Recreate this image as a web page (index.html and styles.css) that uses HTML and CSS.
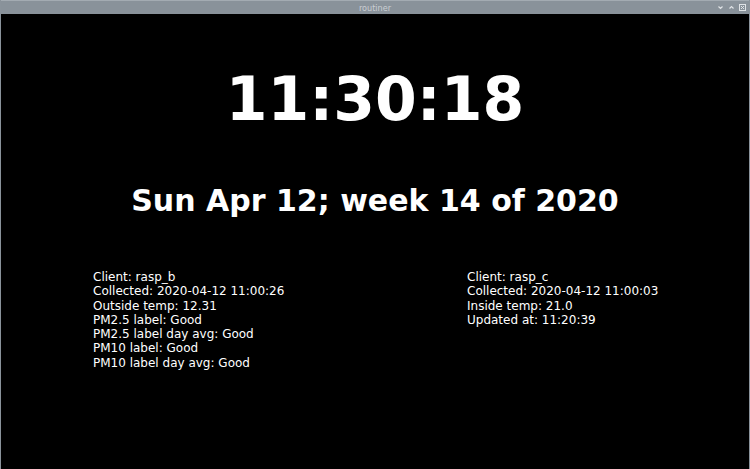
FILE: index.html
```html
<!DOCTYPE html>
<html>
<head>
<meta charset="utf-8">
<title>routiner</title>
<link rel="stylesheet" href="styles.css">
</head>
<body>
<div class="window">
  <div class="titlebar">
    <span class="title">routiner</span>
    <div class="controls">
      <svg class="ctl" width="7" height="7" viewBox="0 0 7 7"><path d="M1.5 2.5 L3.5 4.5 L5.5 2.5" fill="none" stroke="#dfe3e6" stroke-width="1.2"/></svg>
      <svg class="ctl" width="7" height="7" viewBox="0 0 7 7"><path d="M1.5 4.5 L3.5 2.5 L5.5 4.5" fill="none" stroke="#dfe3e6" stroke-width="1.2"/></svg>
      <svg class="ctl" width="7" height="7" viewBox="0 0 7 7"><rect x="0.5" y="0.5" width="6" height="6" fill="none" stroke="#dfe3e6" stroke-width="1"/><path d="M2 2 L5 5 M5 2 L2 5" stroke="#dfe3e6" stroke-width="1"/></svg>
    </div>
  </div>
  <main class="content">
    <div class="clock">11:30:18</div>
    <div class="date">Sun Apr 12; week 14 of 2020</div>
    <div class="panels">
      <div class="panel">
        <div>Client: rasp_b</div>
        <div>Collected: 2020-04-12 11:00:26</div>
        <div>Outside temp: 12.31</div>
        <div>PM2.5 label: Good</div>
        <div>PM2.5 label day avg: Good</div>
        <div>PM10 label: Good</div>
        <div>PM10 label day avg: Good</div>
      </div>
      <div class="panel">
        <div>Client: rasp_c</div>
        <div>Collected: 2020-04-12 11:00:03</div>
        <div>Inside temp: 21.0</div>
        <div>Updated at: 11:20:39</div>
      </div>
    </div>
  </main>
</div>
</body>
</html>
```
FILE: styles.css
```css
html, body {
  margin: 0;
  padding: 0;
  width: 750px;
  height: 469px;
  overflow: hidden;
  background: #000;
}
.window {
  width: 750px;
  height: 469px;
  box-sizing: border-box;
  border-left: 1px solid #8a939b;
  border-right: 1px solid #8a939b;
  display: flex;
  flex-direction: column;
  font-family: "DejaVu Sans", sans-serif;
}
.titlebar {
  height: 14px;
  flex: 0 0 14px;
  background: #89929a;
  border-top: 1px solid #a3abb2;
  box-sizing: border-box;
  position: relative;
  display: flex;
  align-items: center;
  justify-content: center;
}
.title {
  font-family: "Liberation Sans Narrow", "DejaVu Sans Condensed", "Liberation Sans", sans-serif;
  font-size: 9px;
  color: #c9ced3;
  line-height: 12px;
}
.controls {
  position: absolute;
  right: 3px;
  top: 3px;
  display: flex;
  gap: 4px;
}
.ctl { display: block; }
.content {
  flex: 1;
  background: #000;
  color: #fff;
  display: flex;
  flex-direction: column;
}
.clock {
  margin-top: 50px;
  font-size: 60px;
  font-weight: bold;
  line-height: 70px;
  text-align: center;
}
.date {
  margin-top: 49px;
  font-size: 30px;
  font-weight: bold;
  line-height: 35px;
  text-align: center;
}
.panels {
  margin-top: 52px;
  display: grid;
  grid-template-columns: 1fr 1fr;
}
.panel {
  padding-left: 92px;
  font-size: 12px;
  line-height: 14.3px;
}
```
